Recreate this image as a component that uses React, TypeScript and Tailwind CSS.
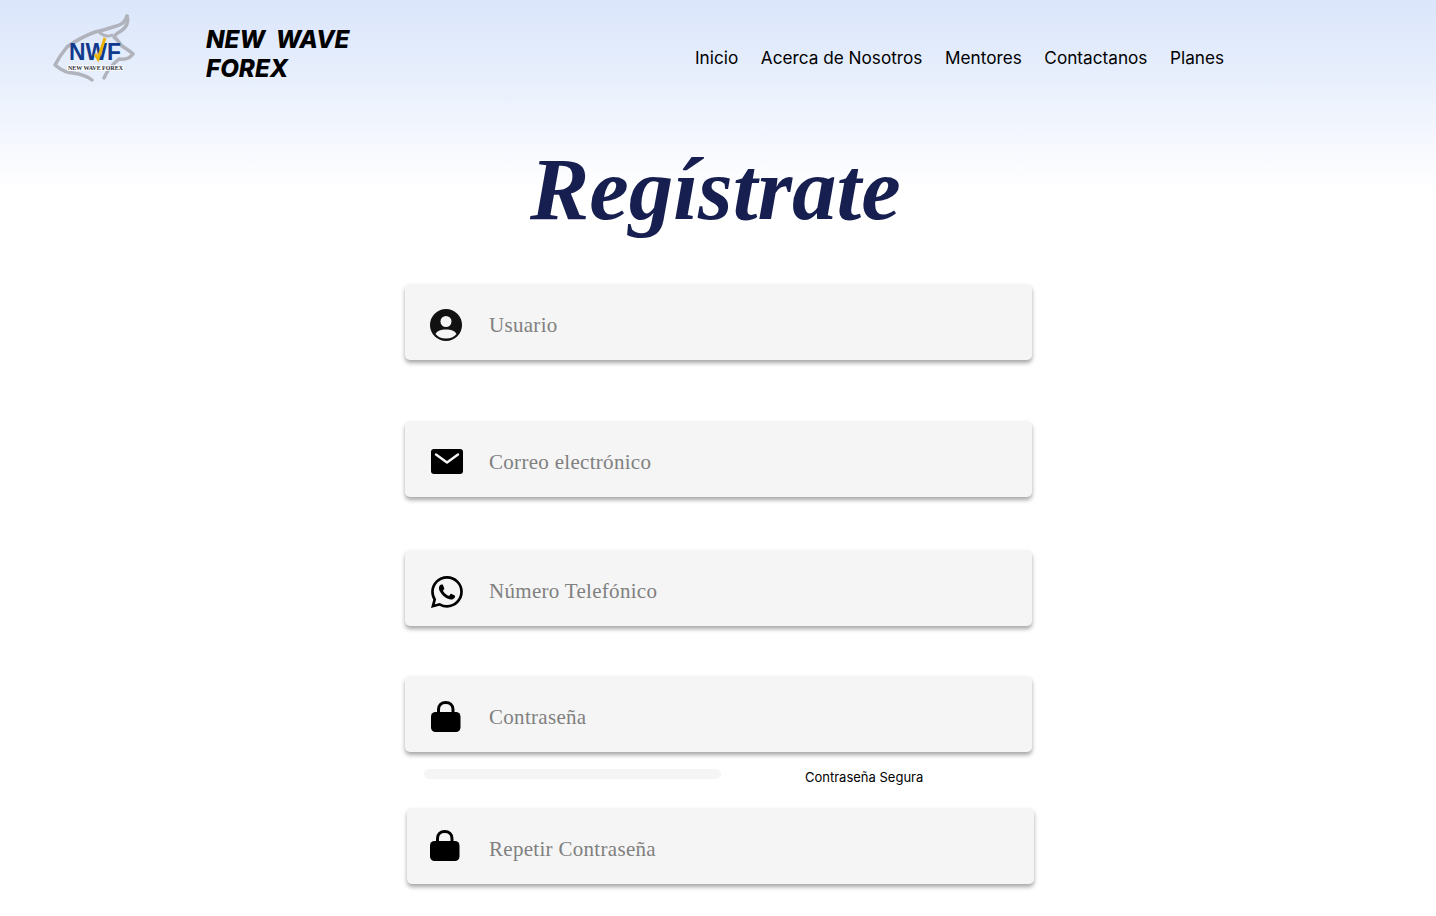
import { BsWhatsapp } from "react-icons/bs";

const navItems = ["Inicio", "Acerca de Nosotros", "Mentores", "Contactanos", "Planes"];

function Logo() {
  return (
    <svg width="84" height="70" viewBox="0 0 84 70" className="shrink-0">
      <g fill="none" stroke="#b0b3bb" strokeLinejoin="round" strokeLinecap="round">
        <path d="M74 3 C72 10 68 12 60 14 C54 16 48 18 42 19 C34 22 22 28 14 34 C9 40 5 46 2 52 C8 57 14 60 20 60 C28 61 34 63 39 67" strokeWidth="3.5" />
        <path d="M74 3 C76 8 74 14 68 18 C64 20 62 22 61 24 C65 27 66 30 69 33 C73 36 77 38 80 41 C77 45 72 47 66 46 C61 50 55 56 51 65" strokeWidth="3.5" />
        <path d="M47 20 C51 23 55 24 59 22" strokeWidth="3" />
      </g>
      <text x="16" y="46.8" fontFamily="Liberation Sans, sans-serif" fontSize="24" fontWeight="700" fill="#123a8c" textLength="52" lengthAdjust="spacingAndGlyphs">NWF</text>
      <path d="M42 41 L45 46 L52 25" fill="none" stroke="#eab308" strokeWidth="3" />
      <rect x="14" y="52" width="57" height="6" fill="#ffffff" fillOpacity="0.75" />
      <text x="15" y="57.2" fontFamily="Liberation Serif, serif" fontSize="5.5" fontWeight="700" fill="#30343c" textLength="55" lengthAdjust="spacingAndGlyphs">NEW WAVE FOREX</text>
    </svg>
  );
}

function UserIcon() {
  return (
    <svg width="32" height="32" viewBox="0 0 32 32">
      <circle cx="16" cy="16" r="16" fill="#111111" />
      <circle cx="16" cy="12.5" r="5.5" fill="#f5f5f5" />
      <path d="M5.5 25 C7.5 21.5 11 20.5 16 20.5 C21 20.5 24.5 21.5 26.5 25 C24 28 20.5 29.5 16 29.5 C11.5 29.5 8 28 5.5 25 Z" fill="#f5f5f5" />
    </svg>
  );
}

function MailIcon() {
  return (
    <svg width="32" height="25" viewBox="0 0 32 25">
      <rect width="32" height="25" rx="3" fill="#000000" />
      <path d="M5 5.5 L16 13.5 L27 5.5" fill="none" stroke="#f5f5f5" strokeWidth="2.4" strokeLinecap="round" strokeLinejoin="round" />
    </svg>
  );
}

function LockIcon() {
  return (
    <svg width="30" height="31" viewBox="0 0 30 31">
      <path d="M7.5 13 V8.5 C7.5 4 10.5 1.5 14.7 1.5 C19 1.5 22 4 22 8.5 V13" fill="none" stroke="#000000" strokeWidth="3" />
      <rect y="11" width="29.5" height="20" rx="4.5" fill="#000000" />
    </svg>
  );
}

type FieldProps = {
  label: string;
  icon: React.ReactNode;
  className: string;
  iconClassName: string;
};

function Field({ label, icon, className, iconClassName }: FieldProps) {
  return (
    <div
      className={
        "flex h-[76px] w-[627px] items-center rounded-[5px] bg-[#f5f5f5] shadow-[0_3px_4px_rgba(0,0,0,0.35)] " +
        className
      }
    >
      <div className={"flex w-[84px] shrink-0 " + iconClassName}>{icon}</div>
      <span className="pt-[6px] font-['Liberation_Serif',serif] text-[21px] leading-none tracking-[0.3px] text-[#808080]">
        {label}
      </span>
    </div>
  );
}

export default function App() {
  return (
    <div className="h-[916px] overflow-hidden bg-[linear-gradient(180deg,#dbe6fb_0px,#e6eefc_70px,#f3f6fe_130px,#ffffff_190px)] font-['Inter',sans-serif]">
      <header className="flex h-[116px] items-start">
        <div className="ml-[53px] mt-[13px]">
          <Logo />
        </div>
        <div className="ml-[69px] mt-[25px] w-[170px] text-[24.2px] font-extrabold italic leading-[29px] text-black font-['Inter',sans-serif]">
          <div className="whitespace-pre">NEW  WAVE</div>
          <div>FOREX</div>
        </div>
        <nav className="ml-[319px] mt-[47px] flex gap-[22.6px] text-[17.2px] leading-[22px] text-black">
          {navItems.map((item) => (
            <a key={item} href="#" className="whitespace-nowrap">
              {item}
            </a>
          ))}
        </nav>
      </header>

      <main className="flex flex-col">
        <h1 className="mt-[18px] h-[150px] pl-[530px] font-['Liberation_Serif',serif] text-[89px] font-bold italic leading-[110px] text-[#161f4f]">
          Regístrate
        </h1>
        <Field label="Usuario" icon={<UserIcon />} iconClassName="pl-[25px] pt-[6px]" className="ml-[405px]" />
        <Field label="Correo electrónico" icon={<MailIcon />} iconClassName="pl-[26px] pt-[4px]" className="ml-[405px] mt-[61px]" />
        <Field label="Número Telefónico" icon={<BsWhatsapp className="h-[32px] w-[32px] text-black" />} iconClassName="pl-[26px] pt-[8px]" className="ml-[405px] mt-[53px]" />
        <Field label="Contraseña" icon={<LockIcon />} iconClassName="pl-[26px] pt-[4px]" className="ml-[405px] mt-[50px]" />
        <div className="ml-[424px] mt-[17px] flex h-[10px] items-center">
          <div className="h-[10px] w-[297px] rounded-[5px] bg-[#f5f5f5]" />
          <span className="ml-[84px] mt-[6px] whitespace-nowrap text-[13px] leading-none text-black">Contraseña Segura</span>
        </div>
        <Field label="Repetir Contraseña" icon={<LockIcon />} iconClassName="pl-[23px] pb-[2px]" className="ml-[407px] mt-[29px] [&>span]:-ml-[2px]" />
      </main>
    </div>
  );
}
